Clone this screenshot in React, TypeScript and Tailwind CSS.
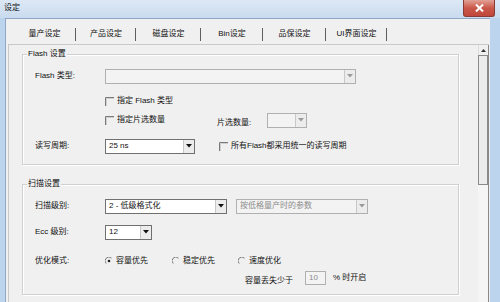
import React from "react";

const FONT = { fontFamily: '"Liberation Sans","Noto Sans CJK SC",sans-serif' };

function Arrow({ disabled }: { disabled?: boolean }) {
  return (
    <div className="w-[11px] h-full flex items-center justify-center border-l border-[#c8c8c8] bg-[#ececec]">
      <svg width="6" height="4" viewBox="0 0 6 4">
        <path d="M0 0 L6 0 L3 3.5 Z" fill={disabled ? "#9a9a9a" : "#111"} />
      </svg>
    </div>
  );
}

function Combo({ w, text, disabled, gray }: { w: string; text?: string; disabled?: boolean; gray?: boolean }) {
  return (
    <div
      className={`${w} h-[15px] shrink-0 flex items-stretch border ${
        disabled ? "border-[#b0b0b0] bg-[#f3f3f3]" : "border-[#707070] bg-white"
      }`}
    >
      <div className={`flex-1 flex items-center pl-[3px] text-[8px] ${gray ? "text-[#8c8c8c]" : "text-[#111]"}`}>{text}</div>
      <Arrow disabled={disabled} />
    </div>
  );
}

function Check() {
  return (
    <svg width="9" height="9" viewBox="0 0 9 9" className="shrink-0">
      <path d="M0.5 9 V0.5 H9" fill="none" stroke="#7a7a7a" strokeWidth="1" />
      <path d="M1.5 9 V1.5 H9" fill="none" stroke="#cfcfcf" strokeWidth="1" />
    </svg>
  );
}

function Radio({ on }: { on?: boolean }) {
  return (
    <svg width="8" height="8" viewBox="0 0 8 8" className="shrink-0">
      <path d="M6.5 1.2 A3.5 3.5 0 1 0 1.2 6.5" fill="none" stroke="#7a7a7a" strokeWidth="1" />
      {on && <circle cx="4" cy="4" r="1.3" fill="#222" />}
    </svg>
  );
}

function Group({ title, children }: { title: string; children: React.ReactNode }) {
  return (
    <div className="relative w-[437px] h-[111px] border border-[#d0d0d0] shadow-[inset_1px_1px_0_#fff,1px_1px_0_#fff]">
      <span className="absolute left-[4px] -top-[6px] px-[1px] bg-[#f0f0f0] text-[8px] leading-[10px] text-[#111]">{title}</span>
      {children}
    </div>
  );
}

const Label = ({ children }: { children: React.ReactNode }) => (
  <div className="w-[82px] shrink-0 pl-[12px] text-[8px] text-[#111]">{children}</div>
);

const T = ({ children, cls = "" }: { children: React.ReactNode; cls?: string }) => (
  <span className={`text-[8px] text-[#111] whitespace-nowrap ${cls}`}>{children}</span>
);

export default function App() {
  const tabs = ["量产设定", "产品设定", "磁盘设定", "Bin设定", "品保设定", "UI界面设定"];
  const widths = ["w-[63px]", "w-[60px]", "w-[65px]", "w-[62px]", "w-[63px]", "w-[61px]"];
  return (
    <div className="w-[500px] h-[302px] overflow-hidden flex flex-col bg-[#bcd4ee]" style={FONT}>
      {/* title bar */}
      <div className="h-[18px] shrink-0 flex items-start justify-between bg-gradient-to-b from-[#dde8f5] to-[#c9dbef]">
        <span className="pl-[4px] pt-[3px] text-[8px] leading-[10px] text-[#111]">设定</span>
        <div className="mr-[5px] w-[32px] h-[17px] rounded-b-[3px] border border-t-0 border-[#8a3a33] bg-gradient-to-b from-[#e1a094] via-[#c9574a] to-[#c0463a] flex items-center justify-center">
          <svg width="9" height="8" viewBox="0 0 9 8">
            <path d="M1 0.5 L8 7.5 M8 0.5 L1 7.5" stroke="#fff" strokeWidth="2" />
          </svg>
        </div>
      </div>
      {/* body */}
      <div className="flex-1 flex">
        <div className="w-[5px] shrink-0" />
        <div className="flex-1 bg-[#f0f0f0] border-l border-t border-[#8fa7c4] flex flex-col">
          {/* tab strip */}
          <div className="mt-[5px] h-[20px] flex pl-[7px]">
            {tabs.map((t, i) => (
              <div key={t} className={`${widths[i]} h-full flex items-center justify-center relative`}>
                <T>{t}</T>
                <span className="absolute right-0 top-[4px] h-[13px] border-r border-[#5e5e5e]" />
              </div>
            ))}
          </div>
          {/* panel */}
          <div className="flex-1 ml-[2px] mr-[1px] flex border-t border-l border-[#c9c9c9]">
            <div className="flex-1 pl-[13px] pt-[9px] flex flex-col">
              <Group title="Flash 设置">
                <div className="mt-[14px] h-[14px] flex items-center">
                  <Label>Flash 类型:</Label>
                  <Combo w="w-[251px]" disabled />
                </div>
                <div className="mt-[11px] h-[14px] flex items-center">
                  <div className="w-[82px]" />
                  <Check />
                  <T cls="ml-[3px]">指定 Flash 类型</T>
                </div>
                <div className="mt-[5px] h-[14px] flex items-center">
                  <div className="w-[82px]" />
                  <div className="w-[112px] flex items-center">
                    <Check />
                    <T cls="ml-[3px]">指定片选数量</T>
                  </div>
                  <div className="w-[50px]"><T>片选数量:</T></div>
                  <Combo w="w-[40px]" disabled />
                </div>
                <div className="mt-[12px] h-[14px] flex items-center">
                  <Label>读写周期:</Label>
                  <Combo w="w-[90px]" text="25 ns" />
                  <div className="ml-[24px] flex items-center">
                    <Check />
                    <T cls="ml-[3px]">所有Flash都采用统一的读写周期</T>
                  </div>
                </div>
              </Group>
              <div className="h-[19px]" />
              <Group title="扫描设置">
                <div className="mt-[14px] h-[14px] flex items-center">
                  <Label>扫描级别:</Label>
                  <Combo w="w-[122px]" text="2 - 低级格式化" />
                  <div className="ml-[9px]">
                    <Combo w="w-[132px]" text="按低格量产时的参数" disabled gray />
                  </div>
                </div>
                <div className="mt-[12px] h-[14px] flex items-center">
                  <Label>Ecc 级别:</Label>
                  <Combo w="w-[47px]" text="12" />
                </div>
                <div className="mt-[15px] h-[14px] flex items-center">
                  <Label>优化模式:</Label>
                  <div className="w-[67px] flex items-center">
                    <Radio on />
                    <T cls="ml-[3px]">容量优先</T>
                  </div>
                  <div className="w-[66px] flex items-center">
                    <Radio />
                    <T cls="ml-[3px]">稳定优先</T>
                  </div>
                  <div className="flex items-center">
                    <Radio />
                    <T cls="ml-[3px]">速度优化</T>
                  </div>
                </div>
                <div className="mt-[3px] h-[14px] flex items-center pl-[222px]">
                  <div className="w-[60px]"><T>容量丢失少于</T></div>
                  <div className="w-[21px] h-[14px] border border-[#b0b0b0] bg-[#f3f3f3] text-[8px] text-[#8c8c8c] flex items-center pl-[3px]">10</div>
                  <T cls="ml-[7px]">% 时开启</T>
                </div>
              </Group>
            </div>
            {/* scrollbar */}
            <div className="w-[11px] flex flex-col border-r border-[#8a8a8a]">
              <div className="h-[10px] flex items-center justify-center border-l border-[#dcdcdc]">
                <svg width="5" height="3" viewBox="0 0 5 3"><path d="M0 3 L5 3 L2.5 0 Z" fill="#333" /></svg>
              </div>
              <div className="h-[130px] border border-[#8a8a8a] bg-[#ececec]" />
              <div className="flex-1 bg-[#f5f5f5]" />
            </div>
          </div>
        </div>
        <div className="w-[10px] shrink-0 bg-[#bcd4ee]" />
      </div>
    </div>
  );
}
